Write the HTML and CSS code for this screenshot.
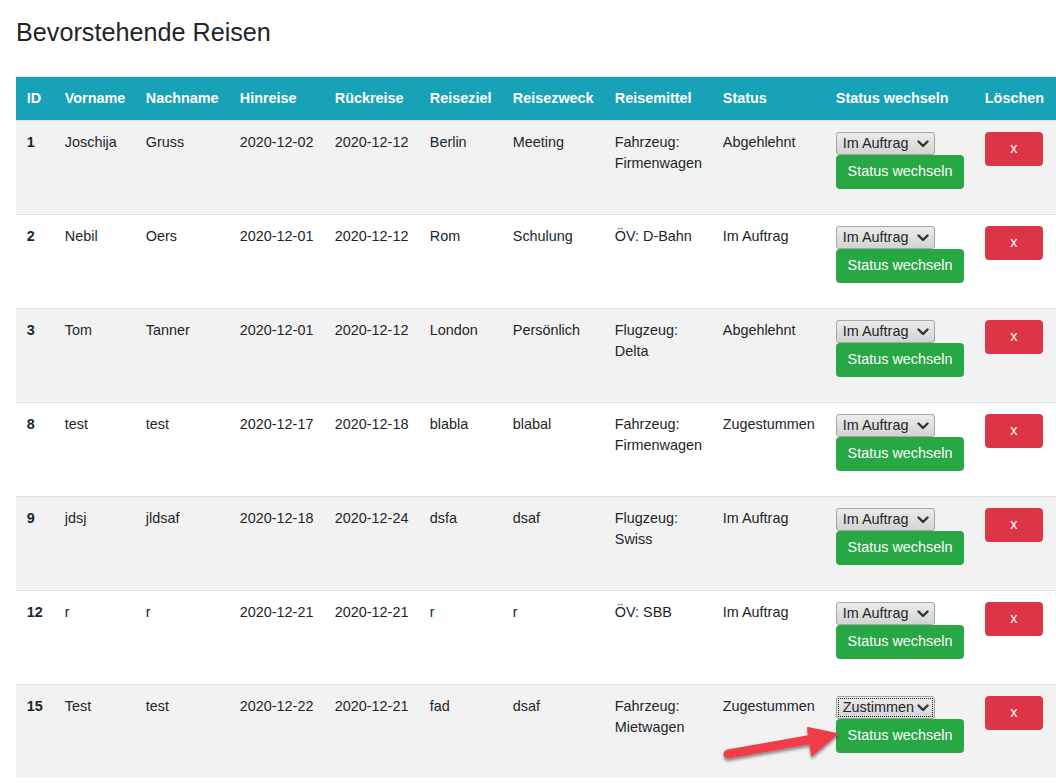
FILE: index.html
```html
<!DOCTYPE html>
<html lang="de">
<head>
<meta charset="utf-8">
<title>Bevorstehende Reisen</title>
<link rel="stylesheet" href="styles.css">
</head>
<body>
<main class="page">
  <h2 class="title">Bevorstehende Reisen</h2>
  <table class="trips">
    <colgroup>
      <col class="c-id"><col class="c-vor"><col class="c-nach"><col class="c-hin"><col class="c-rueck">
      <col class="c-ziel"><col class="c-zweck"><col class="c-mittel"><col class="c-status"><col class="c-wechsel"><col class="c-del">
    </colgroup>
    <thead>
      <tr>
        <th>ID</th><th>Vorname</th><th>Nachname</th><th>Hinreise</th><th>Rückreise</th><th>Reiseziel</th><th>Reisezweck</th><th>Reisemittel</th><th>Status</th><th>Status wechseln</th><th>Löschen</th>
      </tr>
    </thead>
    <tbody>
      <tr>
        <th class="rid">1</th><td>Joschija</td><td>Gruss</td><td>2020-12-02</td><td>2020-12-12</td><td>Berlin</td><td>Meeting</td><td>Fahrzeug:<br>Firmenwagen</td><td>Abgehlehnt</td>
        <td><form class="status-form"><div class="select-wrap"><select class="status-select"><option>Im Auftrag</option><option>Zustimmen</option><option>Ablehnen</option></select><svg class="chev" width="12" height="8" viewBox="0 0 12 8"><path d="M1.5 1.5 L6 6 L10.5 1.5" fill="none" stroke="#333" stroke-width="2.4" stroke-linecap="round" stroke-linejoin="round"/></svg></div><button type="button" class="btn btn-success">Status wechseln</button></form></td>
        <td><button type="button" class="btn btn-danger btn-del">x</button></td>
      </tr>
      <tr>
        <th class="rid">2</th><td>Nebil</td><td>Oers</td><td>2020-12-01</td><td>2020-12-12</td><td>Rom</td><td>Schulung</td><td>ÖV: D-Bahn</td><td>Im Auftrag</td>
        <td><form class="status-form"><div class="select-wrap"><select class="status-select"><option>Im Auftrag</option><option>Zustimmen</option><option>Ablehnen</option></select><svg class="chev" width="12" height="8" viewBox="0 0 12 8"><path d="M1.5 1.5 L6 6 L10.5 1.5" fill="none" stroke="#333" stroke-width="2.4" stroke-linecap="round" stroke-linejoin="round"/></svg></div><button type="button" class="btn btn-success">Status wechseln</button></form></td>
        <td><button type="button" class="btn btn-danger btn-del">x</button></td>
      </tr>
      <tr>
        <th class="rid">3</th><td>Tom</td><td>Tanner</td><td>2020-12-01</td><td>2020-12-12</td><td>London</td><td>Persönlich</td><td>Flugzeug:<br>Delta</td><td>Abgehlehnt</td>
        <td><form class="status-form"><div class="select-wrap"><select class="status-select"><option>Im Auftrag</option><option>Zustimmen</option><option>Ablehnen</option></select><svg class="chev" width="12" height="8" viewBox="0 0 12 8"><path d="M1.5 1.5 L6 6 L10.5 1.5" fill="none" stroke="#333" stroke-width="2.4" stroke-linecap="round" stroke-linejoin="round"/></svg></div><button type="button" class="btn btn-success">Status wechseln</button></form></td>
        <td><button type="button" class="btn btn-danger btn-del">x</button></td>
      </tr>
      <tr>
        <th class="rid">8</th><td>test</td><td>test</td><td>2020-12-17</td><td>2020-12-18</td><td>blabla</td><td>blabal</td><td>Fahrzeug:<br>Firmenwagen</td><td>Zugestummen</td>
        <td><form class="status-form"><div class="select-wrap"><select class="status-select"><option>Im Auftrag</option><option>Zustimmen</option><option>Ablehnen</option></select><svg class="chev" width="12" height="8" viewBox="0 0 12 8"><path d="M1.5 1.5 L6 6 L10.5 1.5" fill="none" stroke="#333" stroke-width="2.4" stroke-linecap="round" stroke-linejoin="round"/></svg></div><button type="button" class="btn btn-success">Status wechseln</button></form></td>
        <td><button type="button" class="btn btn-danger btn-del">x</button></td>
      </tr>
      <tr>
        <th class="rid">9</th><td>jdsj</td><td>jldsaf</td><td>2020-12-18</td><td>2020-12-24</td><td>dsfa</td><td>dsaf</td><td>Flugzeug:<br>Swiss</td><td>Im Auftrag</td>
        <td><form class="status-form"><div class="select-wrap"><select class="status-select"><option>Im Auftrag</option><option>Zustimmen</option><option>Ablehnen</option></select><svg class="chev" width="12" height="8" viewBox="0 0 12 8"><path d="M1.5 1.5 L6 6 L10.5 1.5" fill="none" stroke="#333" stroke-width="2.4" stroke-linecap="round" stroke-linejoin="round"/></svg></div><button type="button" class="btn btn-success">Status wechseln</button></form></td>
        <td><button type="button" class="btn btn-danger btn-del">x</button></td>
      </tr>
      <tr>
        <th class="rid">12</th><td>r</td><td>r</td><td>2020-12-21</td><td>2020-12-21</td><td>r</td><td>r</td><td>ÖV: SBB</td><td>Im Auftrag</td>
        <td><form class="status-form"><div class="select-wrap"><select class="status-select"><option>Im Auftrag</option><option>Zustimmen</option><option>Ablehnen</option></select><svg class="chev" width="12" height="8" viewBox="0 0 12 8"><path d="M1.5 1.5 L6 6 L10.5 1.5" fill="none" stroke="#333" stroke-width="2.4" stroke-linecap="round" stroke-linejoin="round"/></svg></div><button type="button" class="btn btn-success">Status wechseln</button></form></td>
        <td><button type="button" class="btn btn-danger btn-del">x</button></td>
      </tr>
      <tr>
        <th class="rid">15</th><td>Test</td><td>test</td><td>2020-12-22</td><td>2020-12-21</td><td>fad</td><td>dsaf</td><td>Fahrzeug:<br>Mietwagen</td><td>Zugestummen</td>
        <td><form class="status-form"><div class="select-wrap"><select class="status-select is-focused"><option>Zustimmen</option><option>Im Auftrag</option><option>Ablehnen</option></select><svg class="chev" width="12" height="8" viewBox="0 0 12 8"><path d="M1.5 1.5 L6 6 L10.5 1.5" fill="none" stroke="#333" stroke-width="2.4" stroke-linecap="round" stroke-linejoin="round"/></svg></div><button type="button" class="btn btn-success">Status wechseln</button></form></td>
        <td><button type="button" class="btn btn-danger btn-del">x</button></td>
      </tr>
    </tbody>
  </table>
  <svg class="pointer-arrow" width="135" height="55" viewBox="0 0 135 55" aria-hidden="true">
    <defs>
      <filter id="shadow" x="-20%" y="-40%" width="140%" height="180%">
        <feDropShadow dx="0" dy="2.5" stdDeviation="1.6" flood-color="#000" flood-opacity="0.45"/>
      </filter>
    </defs>
    <g filter="url(#shadow)" fill="#f03e48" stroke="#f03e48">
      <line x1="13" y1="37" x2="98" y2="22" stroke-width="9" stroke-linecap="round"/>
      <polygon points="93,11 122,17 97,38" stroke-width="2" stroke-linejoin="round"/>
    </g>
  </svg>
</main>
</body>
</html>
```

FILE: styles.css
```css
html, body {
  margin: 0;
  padding: 0;
  background: #fff;
}

body {
  font-family: "Liberation Sans", Arial, sans-serif;
  font-size: 14.4px;
  line-height: 21.6px;
  color: #212529;
}

.page {
  position: relative;
  padding: 0 0 0 16px;
}

.title {
  margin: 17px 0 28.6px 0;
  font-size: 25.2px;
  line-height: 30.24px;
  font-weight: 400;
  color: #212529;
}

.trips {
  width: 1040px;
  border-collapse: collapse;
  table-layout: fixed;
}

.c-id { width: 38px; }
.c-vor { width: 81px; }
.c-nach { width: 94px; }
.c-hin { width: 95px; }
.c-rueck { width: 95px; }
.c-ziel { width: 83px; }
.c-zweck { width: 102px; }
.c-mittel { width: 108px; }
.c-status { width: 113px; }
.c-wechsel { width: 149px; }
.c-del { width: 82px; }

.trips thead th {
  background: #17a2b8;
  color: #fff;
  font-weight: 700;
  text-align: left;
  padding: 10.7px 10.8px;
  border-top: 1px solid #dee2e6;
  vertical-align: bottom;
  white-space: nowrap;
}

.trips tbody td,
.trips tbody th {
  padding: 11px 10.8px;
  border-top: 1px solid #dee2e6;
  vertical-align: top;
  text-align: left;
  white-space: nowrap;
  overflow: visible;
}

.trips tbody th.rid {
  font-weight: 700;
}

.trips tbody tr:nth-child(odd) {
  background: #f2f2f2;
}

.status-form {
  display: flex;
  flex-direction: column;
  align-items: flex-start;
  margin: 0 0 14px 0;
}

.select-wrap {
  position: relative;
  display: flex;
}

.status-select {
  appearance: none;
  -webkit-appearance: none;
  width: 99px;
  height: 23px;
  margin: 0;
  padding: 0 0 0 6px;
  border: 1px solid #a6a6a6;
  border-radius: 3px;
  background: linear-gradient(#ececec, #d3d3d3);
  font-family: "Liberation Sans", Arial, sans-serif;
  font-size: 14.4px;
  line-height: 21px;
  color: #212529;
}

.status-select.is-focused {
  outline: 1px dotted #222;
  outline-offset: -3px;
}

.chev {
  position: absolute;
  right: 6px;
  top: 8px;
  pointer-events: none;
}

.btn {
  display: inline-flex;
  align-items: center;
  justify-content: center;
  margin: 0;
  border: 1px solid transparent;
  border-radius: 3.6px;
  font-family: "Liberation Sans", Arial, sans-serif;
  font-size: 14.4px;
  line-height: 21.6px;
  color: #fff;
  white-space: nowrap;
  cursor: pointer;
}

.btn-success {
  height: 34px;
  padding: 0 10.8px;
  background: #28a745;
  border-color: #28a745;
}

.btn-danger {
  background: #dc3545;
  border-color: #dc3545;
}

.btn-del {
  width: 58px;
  height: 34px;
  padding: 0;
}

.pointer-arrow {
  position: absolute;
  left: 715px;
  top: 700px;
}
```
